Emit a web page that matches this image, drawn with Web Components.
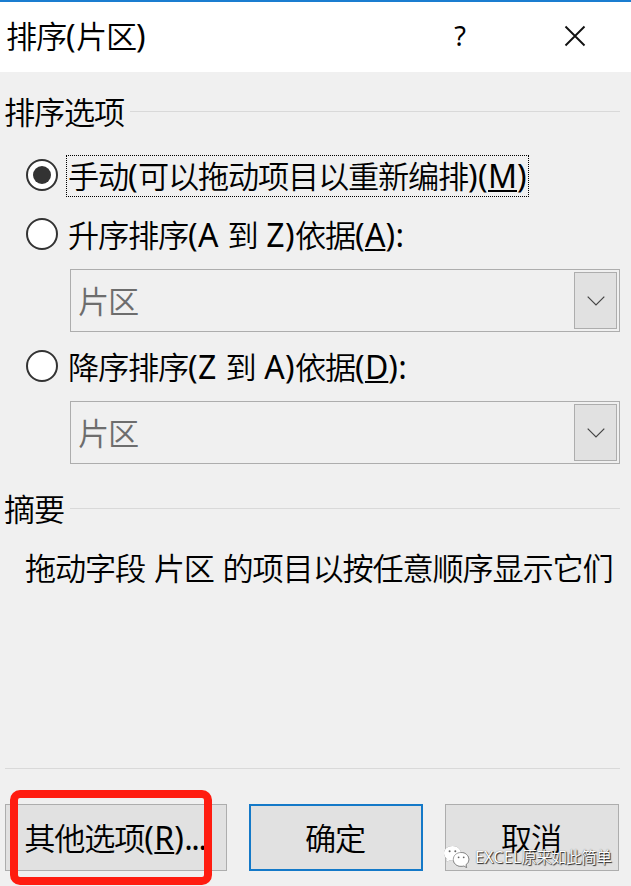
<!DOCTYPE html>
<html lang="zh-CN">
<head>
<meta charset="UTF-8">
<title>排序(片区)</title>
<style>
  html, body {
    margin: 0;
    height: 886px;
    overflow: hidden;
    background: #f0f0f0;
  }
</style>
</head>
<body>

<sort-dialog>
  <title-bar slot="title"><ui-text text="排序(片区)"></ui-text></title-bar>

  <group-header><ui-text text="排序选项"></ui-text></group-header>
  <radio-option checked><ui-text text="手动(可以拖动项目以重新编排)(_M)"></ui-text></radio-option>
  <radio-option><ui-text text="升序排序(A 到 Z)依据(_A):"></ui-text></radio-option>
  <combo-box><ui-text text="片区"></ui-text></combo-box>
  <radio-option class="second"><ui-text text="降序排序(Z 到 A)依据(_D):"></ui-text></radio-option>
  <combo-box><ui-text text="片区"></ui-text></combo-box>

  <group-header class="summary"><ui-text text="摘要"></ui-text></group-header>
  <summary-line><ui-text text="拖动字段 片区 的项目以按任意顺序显示它们"></ui-text></summary-line>

  <dialog-button slot="buttons" class="wide"><ui-text text="其他选项(_R)..."></ui-text></dialog-button>
  <dialog-button slot="buttons" primary><ui-text text="确定"></ui-text></dialog-button>
  <dialog-button slot="buttons"><ui-text text="取消"></ui-text></dialog-button>

  <mark-frame slot="overlay"></mark-frame>
  <wechat-mark slot="overlay"><ui-text text="EXCEL原来如此简单"></ui-text></wechat-mark>
</sort-dialog>

<script>
  // creates the shadow root and fills it
  class BaseElement extends HTMLElement {
    constructor() {
      super();
      this.attachShadow({ mode: 'open' });
      this.shadowRoot.innerHTML = this.constructor.markup;
    }
  }

  // text with latin and chinese runs, "_" marks the access key
  class UiText extends HTMLElement {
    constructor() {
      super();
      this.attachShadow({ mode: 'open' });
    }

    connectedCallback() {
      const runs = this.getAttribute('text').match(/_[A-Z]|[\u4e00-\u9fff]+|\.{3}|[^_.\u4e00-\u9fff]+/g);

      this.shadowRoot.innerHTML = `
        <style>
          :host {
            display: block;
            white-space: nowrap;
            font-family: "Noto Sans", "Noto Sans CJK SC", sans-serif;
            font-size: var(--text-size, 32px);
            line-height: var(--text-line, 42px);
          }
          span { white-space: pre; }
          .latin { letter-spacing: 0.012em; }
          .dots { letter-spacing: -0.045em; }
          .cjk {
            font-family: "Noto Sans CJK SC", sans-serif;
            font-weight: 350;
            font-size: 0.975em;
            letter-spacing: -0.038em;
            line-height: 1;
          }
          .key {
            text-decoration: underline;
            text-decoration-thickness: 2px;
            text-underline-offset: 2px;
            text-decoration-skip-ink: none;
          }
        </style>`;

      runs.forEach((run) => {
        const span = document.createElement('span');

        if (run[0] === '_') {
          span.className = 'key';
          span.textContent = run[1];
        } else {
          span.className = /[\u4e00-\u9fff]/.test(run) ? 'cjk' : run === '...' ? 'dots' : 'latin';
          span.textContent = run;
        }
        this.shadowRoot.appendChild(span);
      });
    }
  }

  class SortDialog extends BaseElement {
    static markup = `
      <style>
        :host {
          display: flex;
          flex-direction: column;
          position: relative;
          box-sizing: border-box;
          width: 631px;
          height: 886px;
          background: #f0f0f0;
          color: #000;
        }
        .body {
          box-sizing: border-box;
          height: 696px;
          padding: 19px 11px 0 5px;
        }
        .footer {
          display: flex;
          gap: 22px;
          margin: 0 11px 0 5px;
          padding-top: 35px;
          border-top: 1px solid #d9d9d9;
        }
        ::slotted(.summary) { margin-top: 24px; }
      </style>
      <slot name="title"></slot>
      <div class="body"><slot></slot></div>
      <div class="footer"><slot name="buttons"></slot></div>
      <slot name="overlay"></slot>`;
  }

  class TitleBar extends BaseElement {
    static markup = `
      <style>
        :host {
          display: grid;
          grid-template-columns: 1fr 115px 115px;
          align-items: center;
          box-sizing: border-box;
          height: 72px;
          padding: 0 0 3px 6px;
          border-top: 2px solid #1a7dd0;
          background: #fff;
        }
        .help {
          margin-left: 3px;
          text-align: center;
          font: 27px/36px "Noto Sans", sans-serif;
        }
        svg { margin-left: 48px; }
      </style>
      <slot></slot>
      <span class="help">?</span>
      <svg width="22" height="22" viewBox="0 0 22 22">
        <path d="M1.5 1.5L20.5 20.5M20.5 1.5L1.5 20.5" fill="none" stroke="#111" stroke-width="1.9"/>
      </svg>`;
  }

  class GroupHeader extends BaseElement {
    static markup = `
      <style>
        :host {
          display: flex;
          align-items: center;
          gap: 6px;
          height: 42px;
          margin-left: -1px;
        }
        i {
          flex: 1;
          height: 1px;
          margin-bottom: 2px;
          background: #d9d9d9;
        }
      </style>
      <slot></slot><i></i>`;
  }

  class RadioOption extends BaseElement {
    static markup = `
      <style>
        :host {
          display: flex;
          align-items: center;
          gap: 8px;
          height: 42px;
          margin: 22px 0 0 21px;
        }
        :host(:not([checked])) { margin-top: 17px; }
        :host(.second) { margin-top: 14px !important; }
        .circle {
          display: grid;
          place-items: center;
          box-sizing: border-box;
          width: 32px;
          height: 32px;
          margin-bottom: 2px;
          border: 2px solid #333;
          border-radius: 50%;
          background: #fff;
        }
        :host([checked]) .circle::after {
          content: "";
          width: 18px;
          height: 18px;
          border-radius: 50%;
          background: #333;
        }
        .label {
          box-sizing: border-box;
          height: 42px;
          padding: 0 0.5px 0 1px;
          border: 1px solid transparent;
          --text-line: 40px;
        }
        :host([checked]) .label { border: 1px dotted #000; }
      </style>
      <span class="circle"></span>
      <div class="label"><slot></slot></div>`;
  }

  class ComboBox extends BaseElement {
    static markup = `
      <style>
        :host {
          display: flex;
          align-items: center;
          justify-content: space-between;
          box-sizing: border-box;
          height: 63px;
          margin: 13px 0 0 65px;
          padding: 2px 2px 2px 7px;
          border: 1px solid #adadad;
          color: #6d6d6d;
        }
        .arrow {
          display: grid;
          place-items: center;
          box-sizing: border-box;
          width: 43px;
          height: 57px;
          border: 1px solid #adadad;
          background: #e1e1e1;
        }
      </style>
      <slot></slot>
      <span class="arrow">
        <svg width="18" height="10" viewBox="0 0 18 10">
          <path d="M0.7 0.7L9 9L17.3 0.7" fill="none" stroke="#444" stroke-width="1.2"/>
        </svg>
      </span>`;
  }

  class SummaryLine extends BaseElement {
    static markup = `
      <style>
        :host {
          display: block;
          margin: 17px 0 0 20px;
        }
      </style>
      <slot></slot>`;
  }

  class DialogButton extends BaseElement {
    static markup = `
      <style>
        :host {
          display: grid;
          place-items: center;
          box-sizing: border-box;
          width: 174px;
          height: 67px;
          border: 1px solid #adadad;
          background: #e1e1e1;
        }
        :host(.wide) { width: 222px; }
        :host([primary]) { border: 2px solid #1479c8; }
        ::slotted(ui-text) { margin-right: 2px; }
      </style>
      <slot></slot>`;
  }

  // red frame drawn over the first button
  class MarkFrame extends BaseElement {
    static markup = `
      <style>
        :host {
          position: absolute;
          left: 10px;
          top: 790px;
          box-sizing: border-box;
          width: 202px;
          height: 95px;
          border: 8px solid #ff1c10;
          border-radius: 10px;
        }
      </style>`;
  }

  class WechatMark extends BaseElement {
    static markup = `
      <style>
        :host {
          display: flex;
          align-items: center;
          gap: 5px;
          position: absolute;
          left: 443px;
          top: 844px;
          color: #fff;
          text-shadow: 1px 1px 1px #222, 0 0 1px #555;
          --text-size: 16px;
          --text-line: 26px;
        }
        svg { filter: drop-shadow(0.5px 0.5px 0.5px #777); }
      </style>
      <svg width="27" height="26" viewBox="0 0 27 26">
        <path d="M9.5 2C4.5 2 1 5.2 1 9.3C1 11.7 2.3 13.7 4.2 15L3.5 18L6.7 16.2C7.6 16.5 8.5 16.6 9.5 16.6C14.5 16.6 18 13.3 18 9.3S14.5 2 9.5 2Z" fill="#fff"/>
        <path d="M18 8.5C13.5 8.5 10.3 11.6 10.3 15.4S13.5 22.3 18 22.3C19 22.3 19.9 22.2 20.8 21.9L23.6 23.5L22.9 20.7C24.7 19.5 25.8 17.6 25.8 15.4C25.8 11.6 22.5 8.5 18 8.5Z" fill="#fff" stroke="#777" stroke-width="0.7"/>
        <g fill="#666">
          <circle cx="6.6" cy="7.2" r="1"/><circle cx="12.3" cy="7.2" r="1"/>
          <circle cx="15.6" cy="13.3" r="0.9"/><circle cx="20.7" cy="13.3" r="0.9"/>
        </g>
      </svg>
      <slot></slot>`;
  }

  customElements.define('ui-text', UiText);
  customElements.define('sort-dialog', SortDialog);
  customElements.define('title-bar', TitleBar);
  customElements.define('group-header', GroupHeader);
  customElements.define('radio-option', RadioOption);
  customElements.define('combo-box', ComboBox);
  customElements.define('summary-line', SummaryLine);
  customElements.define('dialog-button', DialogButton);
  customElements.define('mark-frame', MarkFrame);
  customElements.define('wechat-mark', WechatMark);
</script>
</body>
</html>
